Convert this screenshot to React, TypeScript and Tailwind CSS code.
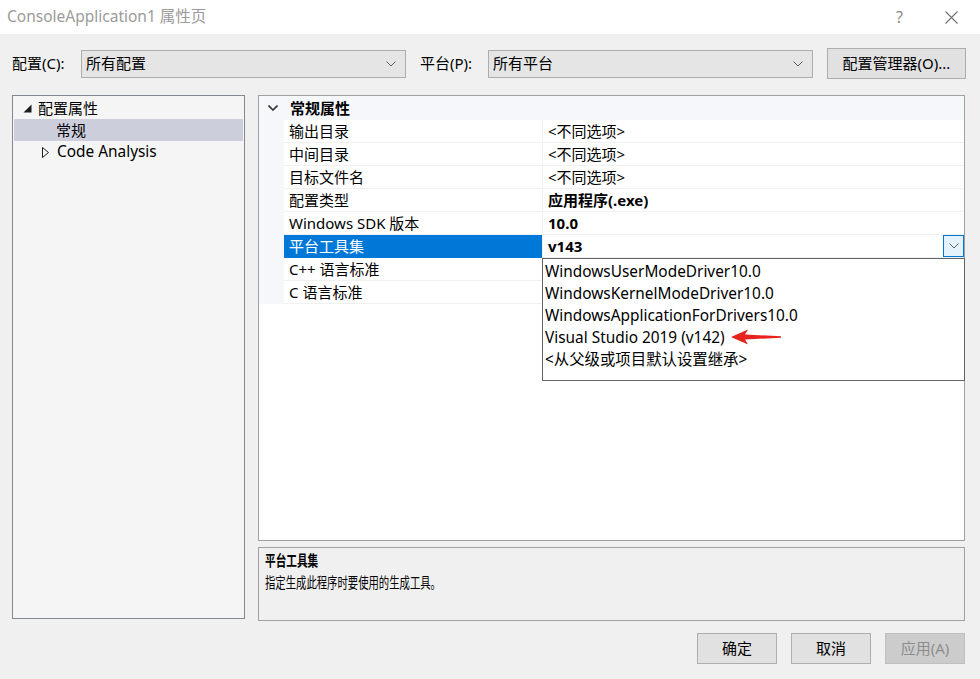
import React from 'react'

const font = { fontFamily: '"Noto Sans", "Noto Sans CJK SC", sans-serif' }

const rows = [
  { name: '输出目录', value: '<不同选项>' },
  { name: '中间目录', value: '<不同选项>' },
  { name: '目标文件名', value: '<不同选项>' },
  { name: '配置类型', value: '应用程序(.exe)', bold: true },
  { name: 'Windows SDK 版本', value: '10.0', bold: true },
  { name: '平台工具集', value: 'v143', bold: true, selected: true },
  { name: 'C++ 语言标准', value: '' },
  { name: 'C 语言标准', value: '' },
]

const options = [
  'WindowsUserModeDriver10.0',
  'WindowsKernelModeDriver10.0',
  'WindowsApplicationForDrivers10.0',
  'Visual Studio 2019 (v142)',
  '<从父级或项目默认设置继承>',
]

function Chevron({ className = '', stroke = '#606060', width = 1 }: { className?: string; stroke?: string; width?: number }) {
  return (
    <svg width="10" height="6" viewBox="0 0 10 6" className={className}>
      <polyline points="0.5,0.5 5,5 9.5,0.5" fill="none" stroke={stroke} strokeWidth={width} />
    </svg>
  )
}

function Select({ value, width }: { value: string; width: string }) {
  return (
    <div className={`${width} h-[28px] bg-[#e5e5e5] border border-[#adadad] flex items-center justify-between pl-[4px] pr-[9px]`}>
      <span>{value}</span>
      <Chevron />
    </div>
  )
}

function Button({ label, disabled }: { label: string; disabled?: boolean }) {
  return (
    <div
      className={`w-[80px] h-[31px] flex items-center justify-center border ${
        disabled ? 'bg-[#cccccc] border-[#bfbfbf] text-[#8d8d8d]' : 'bg-[#e1e1e1] border-[#adadad] text-black'
      }`}
    >
      {label}
    </div>
  )
}

export default function App() {
  return (
    <div className="w-[980px] h-[679px] flex flex-col bg-[#f0f0f0] text-[15px] text-black overflow-hidden" style={font}>
      {/* 标题栏 */}
      <div className="h-[34px] bg-white flex items-center justify-between pl-[7px] pr-[22px] shrink-0">
        <span className="text-[#9b9b9b] text-[15.5px]">ConsoleApplication1 属性页</span>
        <div className="flex items-center gap-[42px]">
          <span className="text-[#8a8a8a] text-[16px]">?</span>
          <svg width="13" height="13" viewBox="0 0 13 13">
            <path d="M0.5 0.5 L12.5 12.5 M12.5 0.5 L0.5 12.5" stroke="#707070" strokeWidth="1.1" />
          </svg>
        </div>
      </div>

      <div className="flex-1 flex flex-col px-[12px] pt-[14px]">
        {/* 配置 / 平台 */}
        <div className="h-[31px] flex items-center">
          <span className="w-[69px]">配置(C):</span>
          <Select value="所有配置" width="w-[325px]" />
          <span className="w-[68px] ml-[14px]">平台(P):</span>
          <Select value="所有平台" width="w-[325px]" />
          <div className="ml-[14px] w-[139px] h-[31px] bg-[#e1e1e1] border border-[#adadad] flex items-center justify-center">
            配置管理器(O)...
          </div>
        </div>

        <div className="flex mt-[16px] gap-[13px]">
          {/* 左侧树 */}
          <div className="w-[233px] h-[524px] bg-[#f5f5f5] border border-[#828790] pt-[1px] px-[1px]">
            <div className="h-[22px] flex items-center">
              <svg width="9" height="9" viewBox="0 0 9 9" className="ml-[9px] mr-[6px]">
                <polygon points="8.5,0.5 8.5,8.5 0.5,8.5" fill="#1e1e1e" />
              </svg>
              <span>配置属性</span>
            </div>
            <div className="h-[22px] flex items-center bg-[#cccedb] pl-[42px]">常规</div>
            <div className="h-[22px] flex items-center">
              <svg width="7" height="11" viewBox="0 0 7 11" className="ml-[28px] mr-[8px]">
                <polygon points="0.5,0.5 6.5,5.5 0.5,10.5" fill="none" stroke="#1e1e1e" strokeWidth="1" />
              </svg>
              <span className="text-[15.4px]">Code Analysis</span>
            </div>
          </div>

          {/* 右侧 */}
          <div className="w-[707px] flex flex-col gap-[6px]">
            <div className="relative h-[446px] bg-white border border-[#a0a0a0]">
              <div className="h-[24px] bg-[#f5f7fb] flex items-center">
                <Chevron className="ml-[9px] mr-[12px]" stroke="#333333" width={1.6} />
                <span className="font-bold">常规属性</span>
              </div>
              {rows.map((r) => (
                <div key={r.name} className="h-[23px] flex">
                  <div className="w-[25px] bg-[#f5f7fb]" />
                  <div
                    className={`w-[258px] flex items-center pl-[5px] border-b ${
                      r.selected ? 'bg-[#0078d7] text-white border-[#0078d7]' : 'border-[#f0f0f0]'
                    }`}
                  >
                    {r.name}
                  </div>
                  <div className="flex-1 flex items-center justify-between pl-[5px] border-l border-b border-[#f0f0f0]">
                    <span className={r.bold ? 'font-bold' : ''}>{r.value}</span>
                    {r.selected && (
                      <div className="w-[21px] h-[22px] bg-[#e5f1fb] border border-[#0078d7] flex items-center justify-center">
                        <Chevron />
                      </div>
                    )}
                  </div>
                </div>
              ))}

              {/* 下拉列表 */}
              <div className="absolute left-[283px] top-[162px] w-[423px] h-[123px] bg-white border border-[#646464] border-t-dotted pt-[2px] text-[15.4px]">
                {options.map((o) => (
                  <div key={o} className="h-[22px] flex items-center pl-[2px]">
                    {o}
                  </div>
                ))}
              </div>

              {/* 红色箭头 */}
              <svg width="54" height="18" viewBox="0 0 54 18" className="absolute left-[470px] top-[232px]">
                <polygon points="2,9 19,1.5 16,6.5 52,8.3 52,9.7 16,11.5 19,16.5" fill="#e8231b" />
              </svg>
            </div>

            {/* 描述 */}
            <div className="h-[74px] border border-[#a0a0a0] px-[6px] pt-[1px]">
              <div className="leading-[22px]">
                <span className="inline-block font-bold text-[15px] origin-left scale-x-[0.71] whitespace-nowrap">平台工具集</span>
              </div>
              <div className="leading-[22px]">
                <span className="inline-block text-[15px] origin-left scale-x-[0.69] whitespace-nowrap">指定生成此程序时要使用的生成工具。</span>
              </div>
            </div>
          </div>
        </div>

        {/* 按钮 */}
        <div className="flex justify-end gap-[14px] mt-[12px] pr-[3px]">
          <Button label="确定" />
          <Button label="取消" />
          <Button label="应用(A)" disabled />
        </div>
      </div>
    </div>
  )
}
